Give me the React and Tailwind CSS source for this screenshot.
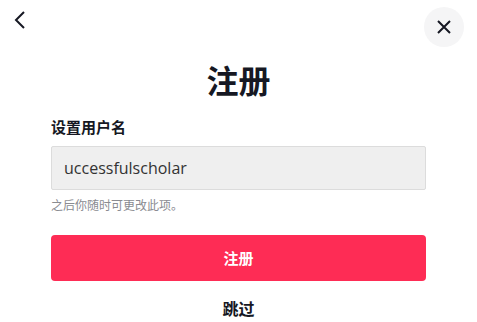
const App = () => {
    return (
        <div className="w-[477px] h-[322px] bg-white relative overflow-hidden" style={{ fontFamily: '"Noto Sans CJK SC", "Noto Sans", sans-serif' }}>
            {/* top bar */}
            <div className="flex justify-between items-start pl-[12px] pr-[13px] pt-[7px]">
                <button className="w-[16px] h-[26px] flex items-center justify-center text-[#161823]">
                    <svg width="12" height="20" viewBox="0 0 12 20" fill="none" stroke="currentColor" strokeWidth="2">
                        <path d="M10 2 L2 10 L10 18" />
                    </svg>
                </button>
                <button className="w-[40px] h-[40px] rounded-full bg-[#f5f5f6] flex items-center justify-center text-[#161823]">
                    <svg width="16" height="16" viewBox="0 0 16 16" fill="none" stroke="currentColor" strokeWidth="2">
                        <path d="M2 2 L14 14 M14 2 L2 14" />
                    </svg>
                </button>
            </div>

            <div className="w-[375px] mx-auto flex flex-col">
                <h1 className="text-center text-[32px] font-bold leading-[44px] mt-[10px] text-[#161823]">注册</h1>

                <div className="mt-[16px] text-[15px] font-bold leading-[20px] text-[#161823]">设置用户名</div>

                <div className="mt-[9px] h-[44px] bg-[#efefef] border border-[#dcdcdc] rounded-[2px] flex items-center px-[12px]">
                    <span className="text-[16px] text-[#333] leading-none" style={{ fontFamily: '"Open Sans", "Noto Sans", sans-serif' }}>uccessfulscholar</span>
                </div>

                <div className="mt-[7px] text-[12px] leading-[16px] text-[#8a8b91]">之后你随时可更改此项。</div>

                <button className="mt-[22px] h-[46px] rounded-[4px] bg-[#fe2c55] text-white text-[15px] font-bold flex items-center justify-center">注册</button>

                <div className="mt-[16px] text-center text-[16px] font-bold text-[#161823] leading-[22px]">跳过</div>
            </div>
        </div>
    );
};

export default App;
